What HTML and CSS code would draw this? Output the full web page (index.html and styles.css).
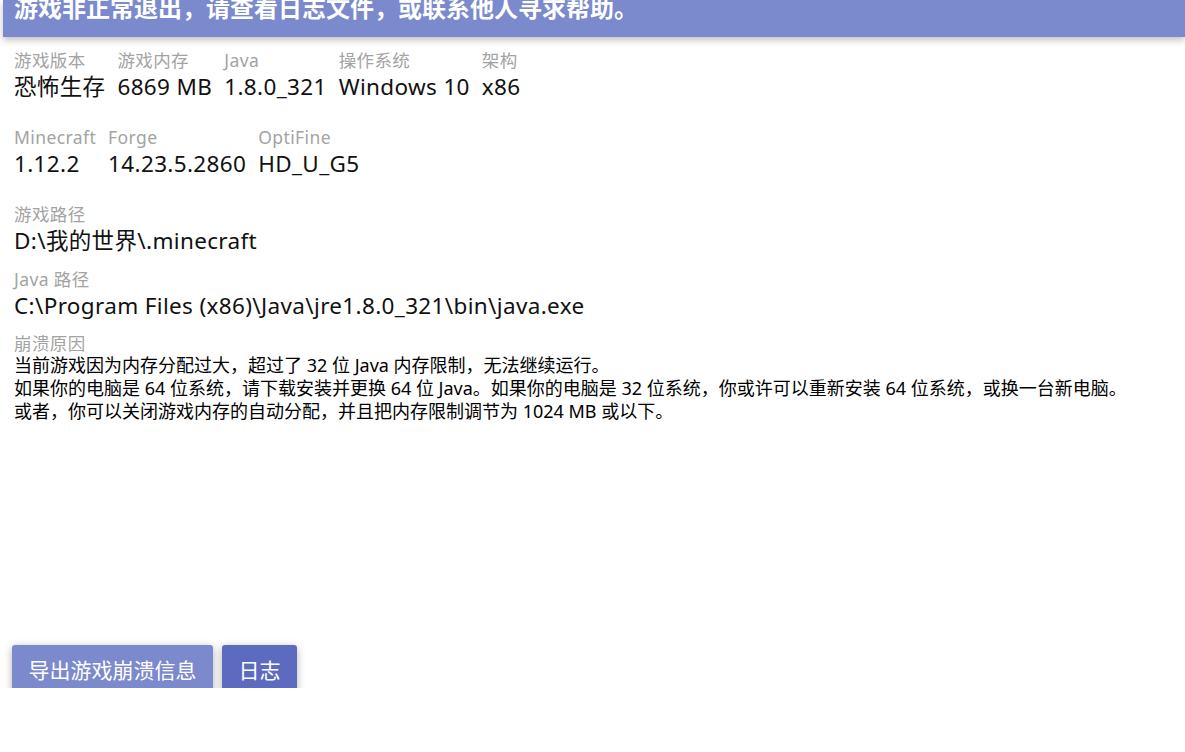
FILE: index.html
```html
<!DOCTYPE html>
<html lang="zh-CN">
<head>
<meta charset="utf-8">
<title>崩溃</title>
<link rel="stylesheet" href="styles.css">
</head>
<body>
<div class="page">
  <header class="topbar">
    <h1 class="title">游戏非正常退出，请查看日志文件，或联系他人寻求帮助。</h1>
  </header>
  <main class="content">
    <div class="row">
      <div class="field"><div class="label">游戏版本</div><div class="value">恐怖生存</div></div>
      <div class="field"><div class="label">游戏内存</div><div class="value">6869 MB</div></div>
      <div class="field"><div class="label">Java</div><div class="value">1.8.0_321</div></div>
      <div class="field"><div class="label">操作系统</div><div class="value">Windows 10</div></div>
      <div class="field"><div class="label">架构</div><div class="value">x86</div></div>
    </div>
    <div class="row row-second">
      <div class="field"><div class="label">Minecraft</div><div class="value">1.12.2</div></div>
      <div class="field"><div class="label">Forge</div><div class="value">14.23.5.2860</div></div>
      <div class="field"><div class="label">OptiFine</div><div class="value">HD_U_G5</div></div>
    </div>
    <div class="block block-path">
      <div class="label">游戏路径</div>
      <div class="value">D:\我的世界\.minecraft</div>
    </div>
    <div class="block">
      <div class="label">Java 路径</div>
      <div class="value">C:\Program Files (x86)\Java\jre1.8.0_321\bin\java.exe</div>
    </div>
    <div class="block">
      <div class="label label-tight">崩溃原因</div>
      <div class="reason">当前游戏因为内存分配过大，超过了 32 位 Java 内存限制，无法继续运行。<br>如果你的电脑是 64 位系统，请下载安装并更换 64 位 Java。如果你的电脑是 32 位系统，你或许可以重新安装 64 位系统，或换一台新电脑。<br>或者，你可以关闭游戏内存的自动分配，并且把内存限制调节为 1024 MB 或以下。</div>
    </div>
  </main>
  <footer class="actions">
    <button class="btn btn-light">导出游戏崩溃信息</button>
    <button class="btn btn-dark">日志</button>
  </footer>
</div>
</body>
</html>
```
FILE: styles.css
```css
* { box-sizing: border-box; }
html, body { margin: 0; padding: 0; background: #fff; }
body {
  font-family: "Noto Sans", "Noto Sans CJK SC", sans-serif;
  color: #000;
}
.page {
  height: 688px;
  overflow: hidden;
  display: flex;
  flex-direction: column;
}
.topbar {
  flex: none;
  margin-left: 3px;
  height: 37px;
  background: #7b89cd;
  box-shadow: 0 3px 7px rgba(0,0,0,0.25);
  padding-left: 11px;
  position: relative;
  z-index: 1;
  overflow: hidden;
}
.title {
  margin: 0;
  margin-top: -9px;
  font-size: 24px;
  font-weight: 700;
  color: #fff;
  line-height: 34px;
  white-space: nowrap;
}
.content {
  flex: 1;
  padding: 11px 14px 0;
}
.row {
  display: flex;
  gap: 12px;
}
.row-second { margin-top: 23px; }
.label {
  font-size: 17.5px;
  letter-spacing: 0.4px;
  color: #a3a3a3;
  line-height: 24px;
  white-space: nowrap;
}
.value {
  font-size: 22.5px;
  letter-spacing: 0.35px;
  line-height: 30px;
  color: #111;
  white-space: nowrap;
}
.block { margin-top: 11px; }
.block.block-path { margin-top: 23px; }
.label-tight { line-height: 22px; }
.reason {
  font-size: 18px;
  line-height: 23px;
  color: #000;
}
.actions {
  flex: none;
  display: flex;
  gap: 9px;
  padding: 0 12px;
  height: 43px;
}
.btn {
  flex: none;
  border: none;
  border-radius: 3px;
  color: #fff;
  font-family: inherit;
  font-size: 21px;
  padding: 0 16.5px;
  height: 50px;
  align-self: flex-start;
  line-height: 46px;
  box-shadow: 0 2px 8px rgba(0,0,0,0.3);
}
.btn-light { background: #7b89cd; }
.btn-dark { background: #5c6bc0; }
```
